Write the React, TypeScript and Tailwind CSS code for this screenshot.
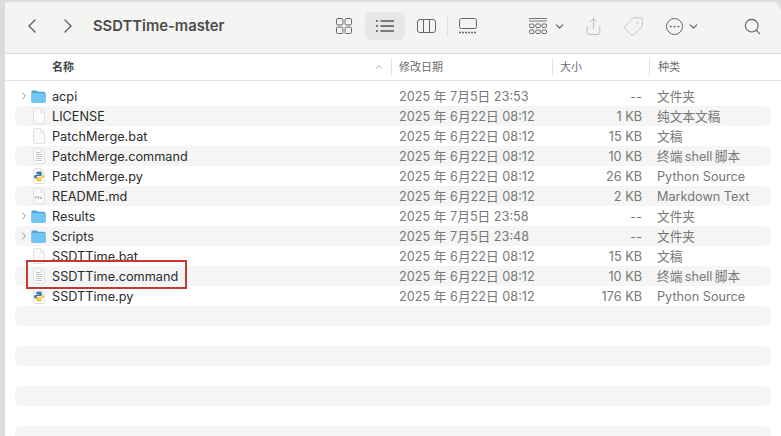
import { ChevronLeft, ChevronRight, ChevronUp, ChevronDown, Search, Share, Tag, Ellipsis } from "lucide-react";

type Kind = "folder" | "blank" | "script" | "python" | "markdown";

const rows: { name: string; date: string; size: string; type: string; icon: Kind }[] = [
  { name: "acpi", date: "2025 年 7月5日 23:53", size: "--", type: "文件夹", icon: "folder" },
  { name: "LICENSE", date: "2025 年 6月22日 08:12", size: "1 KB", type: "纯文本文稿", icon: "blank" },
  { name: "PatchMerge.bat", date: "2025 年 6月22日 08:12", size: "15 KB", type: "文稿", icon: "blank" },
  { name: "PatchMerge.command", date: "2025 年 6月22日 08:12", size: "10 KB", type: "终端\u2009shell\u2009脚本", icon: "script" },
  { name: "PatchMerge.py", date: "2025 年 6月22日 08:12", size: "26 KB", type: "Python Source", icon: "python" },
  { name: "README.md", date: "2025 年 6月22日 08:12", size: "2 KB", type: "Markdown Text", icon: "markdown" },
  { name: "Results", date: "2025 年 7月5日 23:58", size: "--", type: "文件夹", icon: "folder" },
  { name: "Scripts", date: "2025 年 7月5日 23:48", size: "--", type: "文件夹", icon: "folder" },
  { name: "SSDTTime.bat", date: "2025 年 6月22日 08:12", size: "15 KB", type: "文稿", icon: "blank" },
  { name: "SSDTTime.command", date: "2025 年 6月22日 08:12", size: "10 KB", type: "终端\u2009shell\u2009脚本", icon: "script" },
  { name: "SSDTTime.py", date: "2025 年 6月22日 08:12", size: "176 KB", type: "Python Source", icon: "python" },
];

function FileIcon({ kind }: { kind: Kind }) {
  if (kind === "folder") {
    return (
      <svg width="16" height="15" viewBox="0 0 16 15">
        <path d="M0.5 2.5 Q0.5 1 2 1 H5.5 Q6.5 1 7 1.8 L7.4 2.4 H14 Q15.5 2.4 15.5 4 V12.5 Q15.5 14.5 13.5 14.5 H2.5 Q0.5 14.5 0.5 12.5 Z" fill="#4ba3dc" />
        <path d="M0.5 4.8 Q0.5 3.8 1.5 3.8 H14.5 Q15.5 3.8 15.5 4.8 V12.5 Q15.5 14.5 13.5 14.5 H2.5 Q0.5 14.5 0.5 12.5 Z" fill="#72c5f3" />
      </svg>
    );
  }
  return (
    <svg width="14" height="16" viewBox="0 0 14 16">
      <path d="M1.5 1.5 Q1.5 0.5 2.5 0.5 H8.5 L12.5 4.5 V14.5 Q12.5 15.5 11.5 15.5 H2.5 Q1.5 15.5 1.5 14.5 Z" fill="#fbfbfb" stroke="#e0e0e0" />
      <path d="M8.5 0.5 V4.5 H12.5 Z" fill="#efefef" stroke="#e0e0e0" strokeWidth="0.6" />
      {kind === "script" && <path d="M4 4.5 H7.5 M4 6.5 H10 M4 8.5 H10 M4 10.5 H10 M4 12.5 H10" stroke="#c4c4c4" strokeWidth="1" />}
      {kind === "python" && (
        <>
          <path d="M7 3.5 C4.6 3.5 4.3 4.4 4.3 5.2 V6.4 H7.2 V7 H3.4 C2.4 7 2.2 7.9 2.2 8.8 C2.2 10 2.7 10.6 3.6 10.6 H4.7 V9.4 C4.7 8.5 5.4 8 6.2 8 H8.6 C9.3 8 9.8 7.5 9.8 6.8 V5.2 C9.8 4.1 8.9 3.5 7 3.5 Z" fill="#3a76a8" />
          <path d="M7 13.5 C9.4 13.5 9.7 12.6 9.7 11.8 V10.6 H6.8 V10 H10.6 C11.6 10 11.8 9.1 11.8 8.2 C11.8 7.2 11.3 6.4 10.4 6.4 H10.2 V7.6 C10.2 8.5 9.5 9 8.7 9 H5.6 C4.9 9 4.4 9.5 4.4 10.2 V11.8 C4.4 12.9 5.3 13.5 7 13.5 Z" fill="#f2c739" />
        </>
      )}
      {kind === "markdown" && (
        <path d="M3.5 11 V8 L5 9.6 L6.5 8 V11 M9 8 V11 M7.8 9.8 L9 11 L10.2 9.8" fill="none" stroke="#a5a5a5" strokeWidth="0.8" />
      )}
    </svg>
  );
}

export default function App() {
  return (
    <div className="relative w-[781px] h-[436px] overflow-hidden bg-[#dcdcda] pl-[5px] pt-[2px] text-[12.7px] leading-[20px]" style={{ fontFamily: "Inter, 'Noto Sans CJK SC', sans-serif" }}>
      <div className="h-[434px] bg-white rounded-tr-[10px] overflow-hidden">
        {/* toolbar */}
        <div className="h-[52px] pb-[3px] bg-[#f4f4f2] border-b border-[#dadada] flex items-center text-[#5f5f5f]">
          <ChevronLeft className="ml-[15px] w-[24px] h-[24px]" strokeWidth={1.4} />
          <ChevronRight className="ml-[12px] w-[24px] h-[24px]" strokeWidth={1.4} />
          <span className="ml-[13px] w-[131px] whitespace-nowrap text-[14.8px] font-semibold text-[#4c4c4c]">SSDTTime-master</span>
          <svg className="ml-[112px]" width="16" height="16" viewBox="0 0 16 16" fill="none" stroke="#666" strokeWidth="1">
            <rect x="0.5" y="0.5" width="6.4" height="6.4" rx="1.2" />
            <rect x="9.1" y="0.5" width="6.4" height="6.4" rx="1.2" />
            <rect x="0.5" y="9.1" width="6.4" height="6.4" rx="1.2" />
            <rect x="9.1" y="9.1" width="6.4" height="6.4" rx="1.2" />
          </svg>
          <div className="ml-[13px] w-[40px] h-[28px] rounded-[6px] bg-[#e7e7e5] flex items-center justify-center">
            <svg width="18" height="14" viewBox="0 0 18 14" stroke="#555" strokeWidth="1.3">
              <path d="M0 2 H2 M0 7 H2 M0 12 H2 M4.5 2 H18 M4.5 7 H18 M4.5 12 H18" />
            </svg>
          </div>
          <svg className="ml-[12px]" width="19" height="14" viewBox="0 0 19 14" fill="none" stroke="#666" strokeWidth="1">
            <rect x="0.5" y="0.5" width="18" height="13" rx="2.5" />
            <path d="M6.5 0.5 V13.5 M12.5 0.5 V13.5" />
          </svg>
          <div className="ml-[11px] w-px h-[20px] bg-[#e2e2e0]" />
          <svg className="ml-[10px]" width="20" height="16" viewBox="0 0 20 16" fill="none" stroke="#666" strokeWidth="1">
            <rect x="1.5" y="0.5" width="17" height="10" rx="2" />
            <path d="M1 14.5 H19" strokeWidth="1.5" strokeDasharray="2 1" />
          </svg>
          <svg className="ml-[51px]" width="18" height="18" viewBox="0 0 18 18" fill="none" stroke="#666" strokeWidth="1">
            <path d="M0 1.5 H18 M0 4 H18" strokeWidth="0.9" />
            <rect x="0.5" y="7" width="4.5" height="3.5" rx="1" />
            <rect x="6.8" y="7" width="4.5" height="3.5" rx="1" />
            <rect x="13" y="7" width="4.5" height="3.5" rx="1" />
            <rect x="0.5" y="13" width="4.5" height="3.5" rx="1" />
            <rect x="6.8" y="13" width="4.5" height="3.5" rx="1" />
            <rect x="13" y="13" width="4.5" height="3.5" rx="1" />
          </svg>
          <ChevronDown className="ml-[6px] w-[13px] h-[13px]" strokeWidth={2} />
          <Share className="ml-[18px] w-[19px] h-[19px] text-[#b4b4b4]" strokeWidth={1.1} />
          <Tag className="ml-[20px] w-[21px] h-[21px] text-[#c2c2c2] rotate-90" strokeWidth={1.1} />
          <div className="ml-[22px] w-[17px] h-[17px] rounded-full border border-[#666] flex items-center justify-center">
            <Ellipsis className="w-[13px] h-[13px]" strokeWidth={1.6} />
          </div>
          <ChevronDown className="ml-[4px] w-[13px] h-[13px]" strokeWidth={2} />
          <Search className="ml-[43px] w-[19px] h-[19px]" strokeWidth={1.4} />
        </div>
        {/* column header */}
        <div className="h-[27px] border-b border-[#e2e2e2] flex items-center text-[11px] text-[#6b6b6b]">
          <div className="w-[387px] h-[18px] flex items-center justify-between pl-[47px] pr-[6px] border-r border-[#e3e3e3]">
            <span className="font-semibold text-[#444]">名称</span>
            <ChevronUp className="w-[12px] h-[12px] text-[#888]" strokeWidth={1.4} />
          </div>
          <div className="w-[161px] h-[18px] flex items-center pl-[7px] border-r border-[#e3e3e3]">修改日期</div>
          <div className="w-[97px] h-[18px] flex items-center pl-[7px] border-r border-[#e3e3e3]">大小</div>
          <div className="pl-[8px]">种类</div>
        </div>
        {/* file rows */}
        <div className="pt-[5px] pl-[10px] pr-[5px] mr-[5px]">
          {rows.map((row, i) => (
            <div key={row.name} className={`h-[20px] flex items-center rounded-[5px] ${i % 2 === 1 ? "bg-[#f4f5f4]" : ""}`}>
              <div className="w-[16px] flex justify-end">
                {row.icon === "folder" && <ChevronRight className="w-[12px] h-[12px] text-[#6e6e6e] mr-[1px]" strokeWidth={1.6} />}
              </div>
              <div className="w-[15px] flex justify-center"><FileIcon kind={row.icon} /></div>
              <span className="ml-[6px] mt-[2px] w-[347px] text-[#2b2b2b]">{row.name}</span>
              <span className="mt-[2px] w-[200px] text-[#777]">{row.date}</span>
              <span className="mt-[2px] w-[43px] text-right text-[#777]">{row.size}</span>
              <span className="ml-[15px] mt-[2px] text-[#777]">{row.type}</span>
            </div>
          ))}
          <div className="h-[20px] rounded-[5px] bg-[#f4f5f4]" />
          <div className="h-[20px] mt-[20px] rounded-[5px] bg-[#f4f5f4]" />
          <div className="h-[20px] mt-[20px] rounded-[5px] bg-[#f4f5f4]" />
          <div className="h-[20px] mt-[20px] rounded-[5px] bg-[#f4f5f4]" />
        </div>
      </div>
      {/* annotation box */}
      <div className="absolute left-[26px] top-[260px] w-[161px] h-[29px] border-2 border-[#c8372d]" />
    </div>
  );
}
